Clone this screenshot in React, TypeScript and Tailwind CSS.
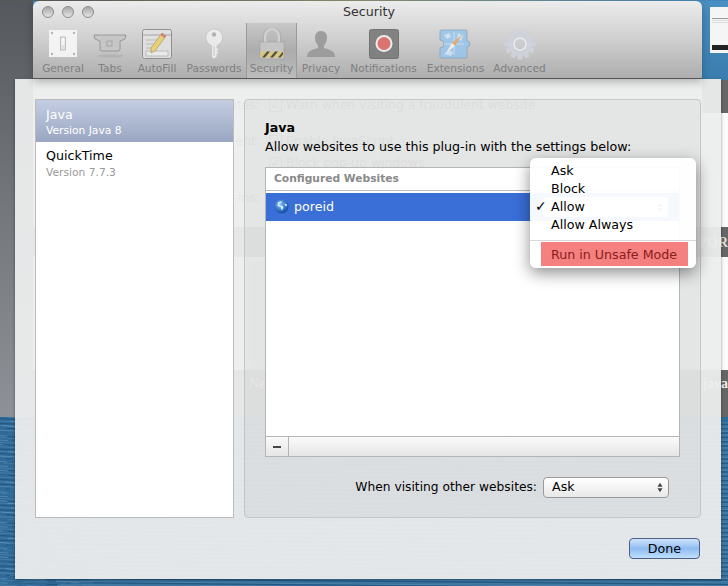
import type { ReactNode } from 'react';

const toolbarItems: { label: string; width: string; icon: ReactNode; active?: boolean }[] = [
  { label: 'General', width: 'w-[50px]', icon: <GeneralIcon /> },
  { label: 'Tabs', width: 'w-[44px]', icon: <TabsIcon /> },
  { label: 'AutoFill', width: 'w-[50px]', icon: <AutoFillIcon /> },
  { label: 'Passwords', width: 'w-[64px]', icon: <KeyIcon /> },
  { label: 'Security', width: 'w-[51px]', icon: <LockIcon />, active: true },
  { label: 'Privacy', width: 'w-[48px]', icon: <PersonIcon /> },
  { label: 'Notifications', width: 'w-[77px]', icon: <NotificationIcon /> },
  { label: 'Extensions', width: 'w-[67px]', icon: <ExtensionIcon /> },
  { label: 'Advanced', width: 'w-[61px]', icon: <GearIcon /> },
];

function GeneralIcon() {
  return (
    <svg width="32" height="32" viewBox="0 0 32 32">
      <rect x="2" y="2" width="28" height="27" fill="#f8f8f8" />
      <g fill="#b4b4b4">
        <circle cx="5" cy="5" r="1.2" />
        <circle cx="27" cy="5" r="1.2" />
        <circle cx="5" cy="26" r="1.2" />
        <circle cx="27" cy="26" r="1.2" />
      </g>
      <rect x="13.5" y="9" width="5" height="13" fill="#e6e6e6" stroke="#a8a8a8" strokeWidth="0.7" />
      <rect x="14.5" y="10" width="3" height="7" fill="#fbfbfb" />
    </svg>
  );
}

function TabsIcon() {
  return (
    <svg width="36" height="32" viewBox="0 0 36 32">
      <path d="M2 7h32l-1 4-5 2v8a2 2 0 0 1-2 2H10a2 2 0 0 1-2-2v-8l-5-2z" fill="#c6c6c6" stroke="#8c8c8c" strokeWidth="0.9" />
      <rect x="15" y="13" width="5" height="5" fill="none" stroke="#9a9a9a" strokeWidth="0.8" />
      <ellipse cx="18" cy="28" rx="13" ry="1.6" fill="#a4a4a4" opacity="0.5" />
    </svg>
  );
}

function AutoFillIcon() {
  return (
    <svg width="32" height="32" viewBox="0 0 32 32">
      <rect x="1.5" y="1.5" width="29" height="29" rx="2" fill="#e2e2e2" stroke="#8a8a8a" />
      <path d="M2 7h28" stroke="#a0a0a0" />
      <path d="M5 12h11M5 16h8M5 20h6" stroke="#b8b8b8" />
      <rect x="5" y="23" width="22" height="5" fill="#eeeeee" stroke="#a8a8a8" strokeWidth="0.7" />
      <path d="M21 5l4 3-11 15-4 2 0-5z" fill="#ecd070" stroke="#a08c48" strokeWidth="0.6" />
      <path d="M21 5l4 3-1.5 2-4-3z" fill="#d8746c" />
    </svg>
  );
}

function KeyIcon() {
  return (
    <svg width="20" height="32" viewBox="0 0 20 32">
      <path d="M10 1a8.500 8.500 0 0 1 3 16.500V20l2.500 1.500-2.500 1.500 2 1.500-2 2V29l-3 2-2.500-2V17.500A8.500 8.500 0 0 1 10 1z" fill="#eeeeee" stroke="#b8b8b8" strokeWidth="0.6" />
      <circle cx="10" cy="6.500" r="2.200" fill="#b0b0b0" />
      <path d="M10 18v10" stroke="#c8c8c8" strokeWidth="1" />
    </svg>
  );
}

function LockIcon() {
  return (
    <svg width="26" height="32" viewBox="0 0 26 32">
      <path d="M6 14V8a7 7 0 0 1 14 0v6" fill="none" stroke="#d4d4d4" strokeWidth="2.600" />
      <path d="M4.500 14V8a8.500 8.500 0 0 1 17 0v6" fill="none" stroke="#9a9a9a" strokeWidth="0.5" />
      <rect x="1" y="14" width="24" height="17" fill="#c8c8c8" stroke="#969696" strokeWidth="0.5" />
      <rect x="1.500" y="23.500" width="23" height="6" fill="#dccb7c" />
      <path d="M3 29.500l5-6h3l-5 6zM11 29.500l5-6h3l-5 6zM19 29.500l5-6v3l-2.500 3z" fill="#4a463a" />
    </svg>
  );
}

function PersonIcon() {
  return (
    <svg width="30" height="28" viewBox="0 0 30 28">
      <path d="M15 1c4 0 6 3 6 7 0 3-1.500 6-3 7.500V18c4 1.500 11 2 11 9H1c0-7 7-7.500 11-9v-2.500C10.500 14 9 11 9 8c0-4 2-7 6-7z" fill="#989898" />
    </svg>
  );
}

function NotificationIcon() {
  return (
    <svg width="30" height="30" viewBox="0 0 30 30">
      <rect x="0.500" y="0.500" width="29" height="29" rx="2" fill="#7a7a7a" stroke="#6a6a6a" />
      <circle cx="15" cy="14.500" r="8.500" fill="#f0f0f0" />
      <circle cx="15" cy="14.500" r="6.500" fill="#dc6a68" />
    </svg>
  );
}

function ExtensionIcon() {
  return (
    <svg width="34" height="30" viewBox="0 0 34 30">
      <path d="M1 2a1 1 0 0 1 1-1h25a1 1 0 0 1 1 1v10a3 3 0 1 1 0 6v10a1 1 0 0 1-1 1H2a1 1 0 0 1-1-1V19a4 4 0 1 0 0-8z" fill="#9cc6ea" stroke="#7c9cba" strokeWidth="0.7" />
      <path d="M5 25l5-4 4 2-2 4zM19 4l5 3-2 5-4-2zM5 6l5-2 2 4-4 2z" fill="#cfe3f4" />
      <path d="M15 3v23M5 15h20" stroke="#e4eff8" strokeWidth="0.6" />
      <path d="M23 6L13 14l3 3z" fill="#e8a468" />
      <path d="M7 24l6-10 3 3z" fill="#f2f2ea" />
    </svg>
  );
}

function GearIcon() {
  const teeth = [0, 30, 60, 90, 120, 150, 180, 210, 240, 270, 300, 330];
  return (
    <svg width="32" height="32" viewBox="0 0 32 32">
      <g fill="#d0d3dd">
        {teeth.map((deg) => (
          <rect key={deg} x="13.500" y="0.500" width="5" height="6" rx="1" transform={`rotate(${deg} 16 16)`} />
        ))}
      </g>
      <circle cx="16" cy="16" r="9" fill="none" stroke="#d0d3dd" strokeWidth="6" />
      <circle cx="16" cy="16" r="6" fill="none" stroke="#eceef2" strokeWidth="1.500" />
    </svg>
  );
}

function GlobeIcon() {
  return (
    <svg width="15" height="15" viewBox="0 0 15 15">
      <defs>
        <radialGradient id="globe" cx="0.4" cy="0.35" r="0.75">
          <stop offset="0" stopColor="#8cc4f4" />
          <stop offset="0.6" stopColor="#2b6fc6" />
          <stop offset="1" stopColor="#0c3a86" />
        </radialGradient>
      </defs>
      <circle cx="7.500" cy="7.500" r="7" fill="url(#globe)" />
      <path d="M4 3.500c1.500-1 3-1.200 4-1l-.8 1.500-1.700.5-.3 1.500 1.800.8 2 .5.300 1.700-1.200 2-1-.4-.4-2.500L3.500 7z" fill="#dcecf9" />
      <path d="M10.500 4.500l2 .5.500 2-1.400.3z" fill="#dcecf9" />
    </svg>
  );
}

function StepperArrows({ tone }: { tone: string }) {
  return (
    <svg width="6" height="11" viewBox="0 0 7 13" fill={tone}>
      <path d="M3.500 1L6.500 5.500h-6zM3.500 12L.5 7.500h6z" />
    </svg>
  );
}

// the water of the desktop picture, only seen at the sides of the sheet
function OceanTexture() {
  const lines = Array.from({ length: 120 }, (_, i) => i);
  return (
    <svg className="h-full w-full" viewBox="0 0 728 170" preserveAspectRatio="none">
      {lines.map((i) => (
        <path
          key={i}
          d={`M${-40 + ((i * 37) % 60)} ${i * 1.45} l ${18 + (i * 13) % 30} 2 m 8 -1 l ${12 + (i * 7) % 20} 2 m 10 -3 L 728 ${i * 1.45 + 6}`}
          stroke={i % 3 === 0 ? '#7fa8c8' : i % 3 === 1 ? '#1d5079' : '#4d86ae'}
          strokeWidth={i % 3 === 0 ? 0.6 : 1}
          fill="none"
          opacity="0.7"
        />
      ))}
    </svg>
  );
}

function Backdrop() {
  return (
    <div className="flex h-full flex-col bg-[#2f6b98]">
      <div className="h-[1px] shrink-0 bg-gradient-to-r from-[#555] via-[#8a8f70] to-[#3f86bd]" />
      <div className="flex h-[416px] shrink-0">
        <div className="w-[33px] shrink-0 bg-gradient-to-b from-[#55585d] via-[#74777c] to-[#8e9298]" />
        <div className="flex min-w-0 flex-1 flex-col bg-[#f7f7f7] font-['Liberation_Serif',serif]">
          <div className="flex h-[79px] shrink-0 justify-end bg-gradient-to-b from-[#4a8fc2] to-[#3a7dae]">
            <div className="mt-[6px] h-[46px] w-[18px] bg-[#f5f5f5] pt-[11px] pl-[2px]">
              <div className="h-[1px] w-full bg-[#999]" />
              <div className="mt-[1px] h-[1px] w-full bg-[#ddd]" />
              <div className="mt-[1px] h-[1px] w-full bg-[#ddd]" />
              <div className="mt-[22px] h-[5px] w-full bg-[#222]" />
            </div>
          </div>
          <div className="h-[33px] shrink-0 bg-[#666]" />
          <div className="h-[114px] shrink-0 bg-[#fbfbfb]" />
          <div className="flex h-[30px] shrink-0 items-center justify-end overflow-hidden bg-[#666] text-[14px] font-bold text-[#ddd]">
            <span>POR</span>
          </div>
          <div className="flex h-[113px] shrink-0 items-center bg-[#fbfbfb] pl-[218px]">
            <div className="h-[104px] w-[16px] bg-[#dde3ea]" />
          </div>
          <div className="flex h-[47px] shrink-0 justify-between bg-[#666] pt-[3px] pl-[216px] text-[14px] font-bold text-[#eee]">
            <span>Ne</span>
            <span>java</span>
          </div>
        </div>
      </div>
      <div className="min-h-0 flex-1">
        <OceanTexture />
      </div>
    </div>
  );
}

function GhostRow({ label, text, checked = true }: { label: string; text: string; checked?: boolean }) {
  return (
    <div className="flex h-[18px] items-center">
      <span className="w-[227px] text-right">{label}</span>
      <span className={`ml-[9px] flex h-[13px] w-[13px] items-center justify-center text-[12px] leading-none ${checked ? 'border border-[#777]' : ''}`}>
        {checked ? '✓' : ''}
      </span>
      <span className="ml-[4px]">{text}</span>
    </div>
  );
}

function PrefsWindow() {
  return (
    <div className="absolute top-[1px] left-[33px] w-[669px]">
      {/* toolbar stays above the sheet, the rest of the window is seen through it */}
      <div className="relative z-20 h-[78px] rounded-t-[6px] border-b border-[#555] bg-gradient-to-b from-[#ececec] via-[#cfcfcf] to-[#aeaeae] shadow-[0_3px_8px_rgba(0,0,0,0.25)]">
        <div className="flex h-[22px] items-center pl-[9px]">
          <div className="flex gap-[8px]">
            <span className="h-[12px] w-[12px] rounded-full border border-[#8c8c8c] bg-gradient-to-b from-[#a9a9a9] to-[#e4e4e4]" />
            <span className="h-[12px] w-[12px] rounded-full border border-[#8c8c8c] bg-gradient-to-b from-[#a9a9a9] to-[#e4e4e4]" />
            <span className="h-[12px] w-[12px] rounded-full border border-[#8c8c8c] bg-gradient-to-b from-[#a9a9a9] to-[#e4e4e4]" />
          </div>
          <span className="ml-[249px] pt-[1px] text-[12.65px] text-[#333]">Security</span>
        </div>
        <div className="flex h-[55px] pl-[5px]">
          {toolbarItems.map((item) => (
            <div
              key={item.label}
              className={`flex shrink-0 flex-col items-center ${item.width} ${
                item.active ? 'border-x border-[#9a9a9a] bg-gradient-to-b from-[#c8c8c8] via-[#acacac] to-[#bcbcbc]' : ''
              }`}
            >
              <div className="flex h-[38px] items-center justify-center pt-[3px] opacity-90">{item.icon}</div>
              <span className="text-[10.6px] leading-[15px] text-[#7f7f7f]">{item.label}</span>
            </div>
          ))}
        </div>
      </div>
      <div className="h-[148px] bg-[#f6f6f6] pt-[17px] text-[12.4px] text-[#555]">
        <GhostRow label="ites:" text="Warn when visiting a fraudulent website" />
        <div className="h-[18px]" />
        <GhostRow label="ent:" text="Enable JavaScript" />
        <div className="h-[4px]" />
        <GhostRow label="" text="Block pop-up windows" />
        <div className="h-[17px]" />
        <GhostRow label="-ins:" text="" checked={false} />
      </div>
    </div>
  );
}

function PopupMenu() {
  return (
    <div className="absolute top-[79px] left-[515px] w-[166px] rounded-[6px] bg-white/95 pt-[3px] pb-[2px] text-[12.65px] text-black shadow-[0_5px_16px_rgba(0,0,0,0.45)]">
      <div className="h-[18px] pl-[21px] leading-[19px]">Ask</div>
      <div className="h-[18px] pl-[21px] leading-[19px]">Block</div>
      <div className="relative h-[18px] pl-[21px] leading-[19px]">
        <span className="absolute left-[5px] text-[14px] font-bold">✓</span>
        Allow
      </div>
      <div className="h-[18px] pl-[21px] leading-[19px]">Allow Always</div>
      <div className="mt-[7px] border-b border-[#d8d8d8]" />
      <div className="mt-[1px] mr-[8px] ml-[11px] h-[24px] bg-[#f48080] pl-[10px] leading-[25px] text-[#8a1c1c]">
        Run in Unsafe Mode
      </div>
    </div>
  );
}

function WebsitesTable() {
  return (
    <div className="mt-[11px] flex h-[290px] w-[415px] flex-col border border-[#b4b4b4] bg-white">
      <div className="flex h-[23px] shrink-0 items-center border-b border-[#bdbdbd] pl-[8px] text-[10.7px] font-bold text-[#8a8a8a]">
        Configured Websites
      </div>
      <div className="mt-[2px] flex h-[28px] shrink-0 items-center justify-between bg-[#3a6fd8] pr-[11px] pl-[8px]">
        <div className="flex items-center gap-[5px] text-[12.65px] text-white">
          <GlobeIcon />
          poreid
        </div>
        <div className="flex h-[20px] w-[125px] items-center justify-end rounded-[4px] bg-white pr-[5px]">
          <StepperArrows tone="#555" />
        </div>
      </div>
      <div className="flex-1" />
      <div className="flex h-[20px] shrink-0 border-t border-[#b4b4b4] bg-gradient-to-b from-[#fafafa] to-[#e6e6e6]">
        <div className="flex w-[23px] items-center justify-center border-r border-[#b4b4b4]">
          <span className="h-[2px] w-[8px] bg-[#444]" />
        </div>
      </div>
    </div>
  );
}

function PluginSheet() {
  return (
    <div className="absolute top-[79px] left-[15px] z-10 h-[500px] w-[706px] bg-[#eceded]/95 pt-[20px] pl-[20px] shadow-[0_1px_3px_rgba(0,0,0,0.4)]">
      <div className="flex gap-[10px]">
        <div className="h-[419px] w-[199px] shrink-0 border border-[#bcbcbc] bg-white">
          <div className="h-[42px] bg-gradient-to-b from-[#c4cde2] to-[#9aa6c2] pt-[6px] pl-[10px] text-white">
            <div className="text-[12.65px] leading-[18px]">Java</div>
            <div className="text-[10.7px] leading-[14px]">Version Java 8</div>
          </div>
          <div className="pt-[5px] pl-[10px]">
            <div className="text-[12.65px] leading-[18px] text-black">QuickTime</div>
            <div className="text-[10.7px] leading-[15px] text-[#999]">Version 7.7.3</div>
          </div>
        </div>
        <div className="h-[419px] w-[457px] shrink-0 rounded-[4px] border border-[#c6c6c6] bg-black/[0.035] pt-[19px] pl-[20px]">
          <div className="text-[12.65px] leading-[18px] font-bold text-black">Java</div>
          <div className="text-[12.65px] leading-[19px] text-black">Allow websites to use this plug-in with the settings below:</div>
          <WebsitesTable />
          <div className="mt-[19px] flex h-[22px] w-[404px] items-center justify-end gap-[6px] text-[12.25px] text-black">
            <span>When visiting other websites:</span>
            <div className="flex h-[21px] w-[126px] items-center justify-between rounded-[4px] border border-[#9a9a9a] bg-gradient-to-b from-white via-[#f4f4f4] to-[#e8e8e8] pr-[5px] pl-[8px] text-[12.65px]">
              Ask
              <StepperArrows tone="#444" />
            </div>
          </div>
        </div>
      </div>
      <div className="mt-[20px] flex justify-end pr-[21px]">
        <button className="h-[21px] w-[71px] rounded-[4px] border border-[#4f5f8c] bg-gradient-to-b from-[#d0e4fa] via-[#8fbcf0] to-[#c0e0ff] pt-[2px] text-[12.65px] leading-none text-black">
          Done
        </button>
      </div>
      <PopupMenu />
    </div>
  );
}

export default function App() {
  return (
    <div className="relative h-[586px] w-[728px] overflow-hidden font-['DejaVu_Sans',sans-serif]">
      <Backdrop />
      <PrefsWindow />
      <PluginSheet />
    </div>
  );
}
